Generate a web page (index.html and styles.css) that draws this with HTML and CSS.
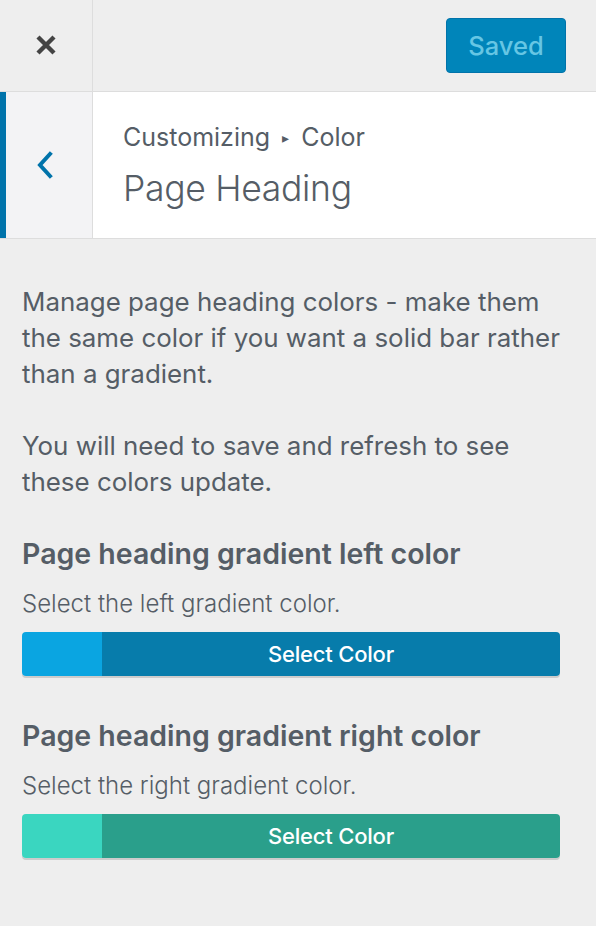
FILE: index.html
```html
<!DOCTYPE html>
<html>
<head>
<meta charset="utf-8">
<link rel="stylesheet" href="styles.css">
</head>
<body>
<div class="panel">
  <header class="topbar">
    <button class="close" aria-label="Close">
      <svg width="22" height="22" viewBox="0 0 22 22"><path d="M3 3 L19 19 M19 3 L3 19" stroke="#444" stroke-width="4.4" stroke-linecap="butt"/></svg>
    </button>
    <div class="topbar-fill">
      <button class="saved">Saved</button>
    </div>
  </header>
  <section class="section-head">
    <button class="back" aria-label="Back">
      <svg width="20" height="30" viewBox="0 0 20 30"><path d="M15 3 L5 14 L15 25" fill="none" stroke="#0073aa" stroke-width="4" stroke-linecap="square" stroke-linejoin="miter"/></svg>
    </button>
    <div class="titles">
      <div class="crumb">Customizing <span class="arrow">▸</span> Color</div>
      <h1 class="title">Page Heading</h1>
    </div>
  </section>
  <main class="content">
    <p class="desc">Manage page heading colors - make them the same color if you want a solid bar rather than a gradient.</p>
    <p class="desc desc-last">You will need to save and refresh to see these colors update.</p>

    <div class="control">
      <h2 class="label">Page heading gradient left color</h2>
      <p class="help">Select the left gradient color.</p>
      <button class="picker blue"><span class="swatch"></span><span class="picker-text">Select Color</span></button>
    </div>

    <div class="control">
      <h2 class="label">Page heading gradient right color</h2>
      <p class="help">Select the right gradient color.</p>
      <button class="picker teal"><span class="swatch"></span><span class="picker-text">Select Color</span></button>
    </div>
  </main>
</div>
</body>
</html>
```
FILE: styles.css
```css
* { box-sizing: border-box; }
html, body { margin: 0; padding: 0; }
body {
  background: #eeeeee;
  font-family: Inter, "Noto Sans", "Liberation Sans", sans-serif;
  color: #555d66;
  width: 596px;
  height: 926px;
  overflow: hidden;
}
button { font-family: inherit; border: 0; padding: 0; margin: 0; cursor: pointer; }

.topbar {
  display: flex;
  height: 92px;
  border-bottom: 1px solid #dddddd;
  background: #eeeeee;
}
.close {
  width: 93px;
  background: transparent;
  border-right: 1px solid #dddddd;
  display: flex;
  align-items: center;
  justify-content: center;
  padding-bottom: 2px;
}
.topbar-fill {
  flex: 1;
  display: flex;
  justify-content: flex-end;
  align-items: flex-start;
  padding: 18px 30px 0 0;
}
.saved {
  width: 120px;
  height: 55px;
  background: #0085ba;
  border: 1px solid #0073aa;
  border-radius: 4px;
  color: #66c6e4;
  font-size: 25.5px;
  font-weight: 500;
  padding-bottom: 1px;
}

.section-head {
  display: flex;
  height: 147px;
  background: #ffffff;
  border-bottom: 1px solid #dddddd;
}
.back {
  width: 93px;
  background: #f3f3f5;
  border-left: 6px solid #0073aa;
  border-right: 1px solid #dddddd;
  display: flex;
  align-items: center;
  justify-content: center;
  padding-right: 8px;
  padding-top: 2px;
}
.titles {
  padding: 30px 0 0 30px;
}
.crumb {
  font-size: 25px;
  line-height: 30px;
  color: #555d66;
  font-weight: 400;
}
.arrow {
  font-size: 14px;
  display: inline-block;
  vertical-align: 3px;
  margin: 0 5px;
}
.title {
  margin: 14px 0 0 0;
  font-size: 35.5px;
  line-height: 44px;
  font-weight: 300;
  color: #555d66;
  letter-spacing: -0.3px;
}

.content {
  padding: 45px 22px 0 22px;
}
.desc {
  margin: 0 0 36px 0;
  font-size: 25.9px;
  line-height: 36px;
  color: #555d66;
}
.desc-last { margin-bottom: 36px; }

.control { margin-bottom: 42px; }
.label {
  margin: 0;
  font-size: 28.5px;
  line-height: 36px;
  font-weight: 600;
  color: #555d66;
}
.help {
  margin: 17px 0 0 0;
  font-size: 24px;
  line-height: 30px;
  font-weight: 300;
  color: #555d66;
}
.picker {
  display: flex;
  width: 538px;
  height: 44px;
  margin-top: 13px;
  border-radius: 4px;
  overflow: hidden;
  box-shadow: 0 2px 0 #cccccc;
}
.swatch { width: 80px; height: 100%; display: block; }
.picker-text {
  flex: 1;
  display: flex;
  align-items: center;
  justify-content: center;
  color: #ffffff;
  font-size: 22px;
  font-weight: 500;
  letter-spacing: -0.2px;
}
.blue .swatch { background: #0aa5e1; }
.blue .picker-text { background: #077cab; }
.teal .swatch { background: #3ad6c0; }
.teal .picker-text { background: #2a9f8b; }
```
